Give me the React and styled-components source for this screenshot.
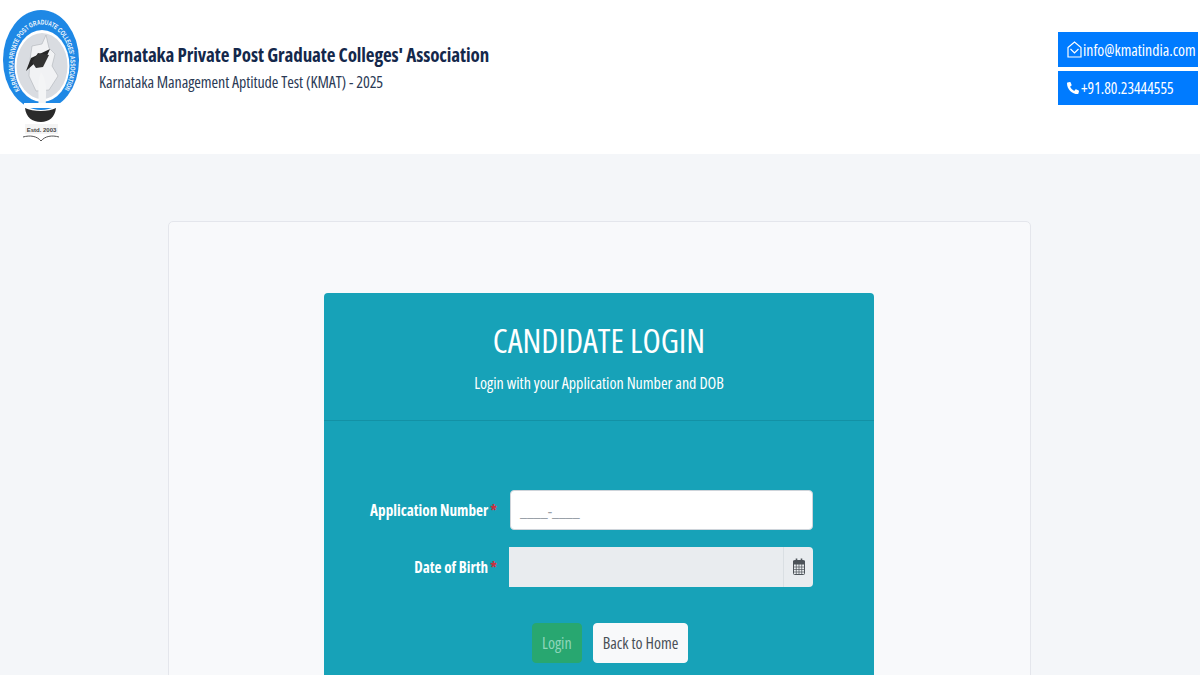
import React from "react";
import styled, { createGlobalStyle } from "styled-components";
import { FaPhoneAlt } from "react-icons/fa";

const Global = createGlobalStyle`
    html, body {
        margin: 0;
        height: 675px;
        overflow: hidden;
        background: #f4f6f9;
        font-family: "Open Sans", "Noto Sans", sans-serif;
        font-stretch: 75%;
    }
    * { box-sizing: border-box; }
`;

const Header = styled.header`
    height: 154px;
    background: #fff;
    display: flex;
    align-items: flex-start;
    justify-content: space-between;
    padding: 0 2px 0 0;
`;

const Brand = styled.div`
    display: flex;
    align-items: flex-start;
`;

const LogoBox = styled.div`
    width: 99px;
    height: 150px;
    flex: none;
`;

const BrandText = styled.div`
    padding-top: 42px;
`;

const BrandTitle = styled.h1`
    margin: 0;
    font-size: 19px;
    line-height: 27px;
    font-weight: 700;
    letter-spacing: -0.1px;
    color: #14284b;
    white-space: nowrap;
`;

const BrandSub = styled.p`
    margin: 1px 0 0;
    font-size: 16px;
    line-height: 24px;
    font-weight: 400;
    letter-spacing: -0.08px;
    color: #2b3a55;
    white-space: nowrap;
`;

const Contacts = styled.div`
    width: 140px;
    padding-top: 32px;
    display: flex;
    flex-direction: column;
    gap: 4px;
`;

const ContactBox = styled.div`
    height: ${(p) => p.$h}px;
    background: #007bff;
    color: #fff;
    font-size: ${(p) => p.$size}px;
    display: flex;
    align-items: center;
    gap: ${(p) => p.$gap}px;
    padding-left: 9px;
    white-space: nowrap;
`;

const Card = styled.main`
    width: 863px;
    height: 500px;
    margin: 67px 0 0 168px;
    background: #f8f9fb;
    border: 1px solid #e4e6ec;
    border-radius: 5px;
    padding: 71px 0 0 155px;
    display: flex;
`;

const Panel = styled.section`
    width: 550px;
    background: #17a2b8;
    border-radius: 4px 4px 0 0;
`;

const PanelHead = styled.div`
    height: 127.5px;
    border-bottom: 1px solid #1391a5;
    padding-top: 27px;
    text-align: center;
    color: #fff;
`;

const Title = styled.h2`
    margin: 0;
    font-size: 33.5px;
    line-height: 40px;
    font-weight: 500;
`;

const Sub = styled.p`
    margin: 11px 0 0;
    font-size: 16px;
    line-height: 24px;
`;

const Form = styled.div`
    padding-top: 69px;
`;

const Row = styled.div`
    display: flex;
    align-items: center;
    height: 40px;
    margin-bottom: 17px;
`;

const Label = styled.label`
    width: 173px;
    text-align: right;
    font-size: 15.2px;
    font-weight: 700;
    color: #fff;
    white-space: nowrap;
`;

const Req = styled.span`
    color: #c9303f;
    margin-left: 2px;
`;

const Input = styled.div`
    width: 303px;
    height: 40px;
    margin-left: 13px;
    background: #fff;
    border: 1px solid #ced4da;
    border-radius: 4px;
    padding-left: 9px;
    font-size: 16px;
    line-height: 40px;
    color: #9aa1a8;
`;

const DateGroup = styled.div`
    width: 304px;
    height: 40px;
    margin-left: 12px;
    display: flex;
`;

const DateInput = styled.div`
    flex: 1;
    background: #e9ecef;
`;

const DateAddon = styled.div`
    width: 30px;
    background: #e9ecef;
    border-left: 1px solid #dadfe3;
    border-radius: 0 4px 4px 0;
    display: flex;
    align-items: center;
    justify-content: center;
`;

const Actions = styled.div`
    display: flex;
    gap: 11px;
    padding: 19px 0 0 208px;
`;

const Button = styled.button`
    height: 40px;
    padding: 0 9px;
    border-radius: 4px;
    font: inherit;
    font-size: 16px;
    border: 1px solid ${(p) => (p.$light ? "#f8f9fa" : "#28a770")};
    background: ${(p) => (p.$light ? "#f8f9fa" : "#28a770")};
    color: ${(p) => (p.$light ? "#495057" : "#8fd6bb")};
`;

const Logo = () => (
    <svg width="99" height="150" viewBox="0 0 99 150">
        <defs>
            <path id="ring" d="M 20 90 A 28.5 40 0 1 1 64 90" />
        </defs>
        <ellipse cx="41" cy="60" rx="38" ry="50" fill="#1e88e5" />
        <ellipse cx="42" cy="66" rx="27.5" ry="36" fill="#fff" />
        <ellipse cx="42" cy="66" rx="25.5" ry="33" fill="#d9dce1" />
        <text fontFamily="Liberation Sans, sans-serif" fontSize="7" fontWeight="700" fill="#f2f7fc">
            <textPath href="#ring" textLength="160" lengthAdjust="spacingAndGlyphs">KARNATAKA PRIVATE POST GRADUATE COLLEGES' ASSOCIATION</textPath>
        </text>
        <path d="M 32 46 L 42 44 L 46 35 L 49 48 L 55 54 L 52 66 L 58 76 L 49 90 L 36 91 L 29 76 L 30 60 Z" fill="#f1f2f4" stroke="#a5a9ae" strokeWidth="0.5" />
        <path d="M 26 71 L 31 58 L 50 49 L 46 58 L 36 62 Z" fill="#262626" />
        <path d="M 32 62 L 38 53 L 49 55 L 43 67 L 36 68 Z" fill="#333" />
        <path d="M 41 72 C 36 84 40 96 38 108 L 46 108 C 45 96 49 84 41 72 Z" fill="#f4f5f6" />
        <path d="M 24 103 L 60 103 L 60 108 L 24 108 Z" fill="#fff" />
        <path d="M 25 108 C 33 112 49 112 56 108 C 55 117 49 122 41 122 C 32 122 26 117 25 108 Z" fill="#2a2a2a" />
        <rect x="25" y="124" width="33" height="10" fill="#f4f4f4" />
        <text x="41.5" y="131.5" textAnchor="middle" fontFamily="Liberation Sans, sans-serif" fontSize="6" fontWeight="700" fill="#444">Estd.  2003</text>
        <path d="M 23 137 C 30 135 37 136 41 141 C 45 136 52 135 59 137" fill="none" stroke="#555" strokeWidth="1" />
    </svg>
);

const MailOpen = () => (
    <svg width="15" height="17" viewBox="0 0 15 17" fill="none" stroke="#fff" strokeWidth="1.2">
        <path d="M 1 6.5 L 7.5 1 L 14 6.5 L 14 16 L 1 16 Z" />
        <path d="M 3.5 8 L 7.5 12 L 11.5 8" />
    </svg>
);

const CalendarGrid = () => (
    <svg width="12" height="17" viewBox="0 0 12 17" fill="none" stroke="#4d5359">
        <rect x="0.5" y="2.5" width="11" height="14" rx="1" strokeWidth="1" />
        <path d="M 0.5 3 L 11.5 3 L 11.5 6 L 0.5 6 Z" fill="#4d5359" strokeWidth="1" />
        <path d="M 3.5 0.5 L 3.5 3.5 M 8.5 0.5 L 8.5 3.5" strokeWidth="1.6" />
        <path d="M 0.5 9 L 11.5 9 M 0.5 11.5 L 11.5 11.5 M 0.5 14 L 11.5 14 M 3.3 6 L 3.3 16 M 6 6 L 6 16 M 8.7 6 L 8.7 16" strokeWidth="0.7" />
    </svg>
);

const App = () => {
    return (
        <>
            <Global />
            <Header>
                <Brand>
                    <LogoBox><Logo /></LogoBox>
                    <BrandText>
                        <BrandTitle>Karnataka Private Post Graduate Colleges' Association</BrandTitle>
                        <BrandSub>Karnataka Management Aptitude Test (KMAT) - 2025</BrandSub>
                    </BrandText>
                </Brand>
                <Contacts>
                    <ContactBox $h={35} $gap={1} $size={15.8}><MailOpen />info@kmatindia.com</ContactBox>
                    <ContactBox $h={34} $gap={2} $size={15.5}><FaPhoneAlt size={12} />+91.80.23444555</ContactBox>
                </Contacts>
            </Header>
            <Card>
                <Panel>
                    <PanelHead>
                        <Title>CANDIDATE LOGIN</Title>
                        <Sub>Login with your Application Number and DOB</Sub>
                    </PanelHead>
                    <Form>
                        <Row>
                            <Label>Application Number<Req>*</Req></Label>
                            <Input>____-____</Input>
                        </Row>
                        <Row>
                            <Label>Date of Birth<Req>*</Req></Label>
                            <DateGroup>
                                <DateInput />
                                <DateAddon><CalendarGrid /></DateAddon>
                            </DateGroup>
                        </Row>
                        <Actions>
                            <Button>Login</Button>
                            <Button $light>Back to Home</Button>
                        </Actions>
                    </Form>
                </Panel>
            </Card>
        </>
    );
};

export default App;
